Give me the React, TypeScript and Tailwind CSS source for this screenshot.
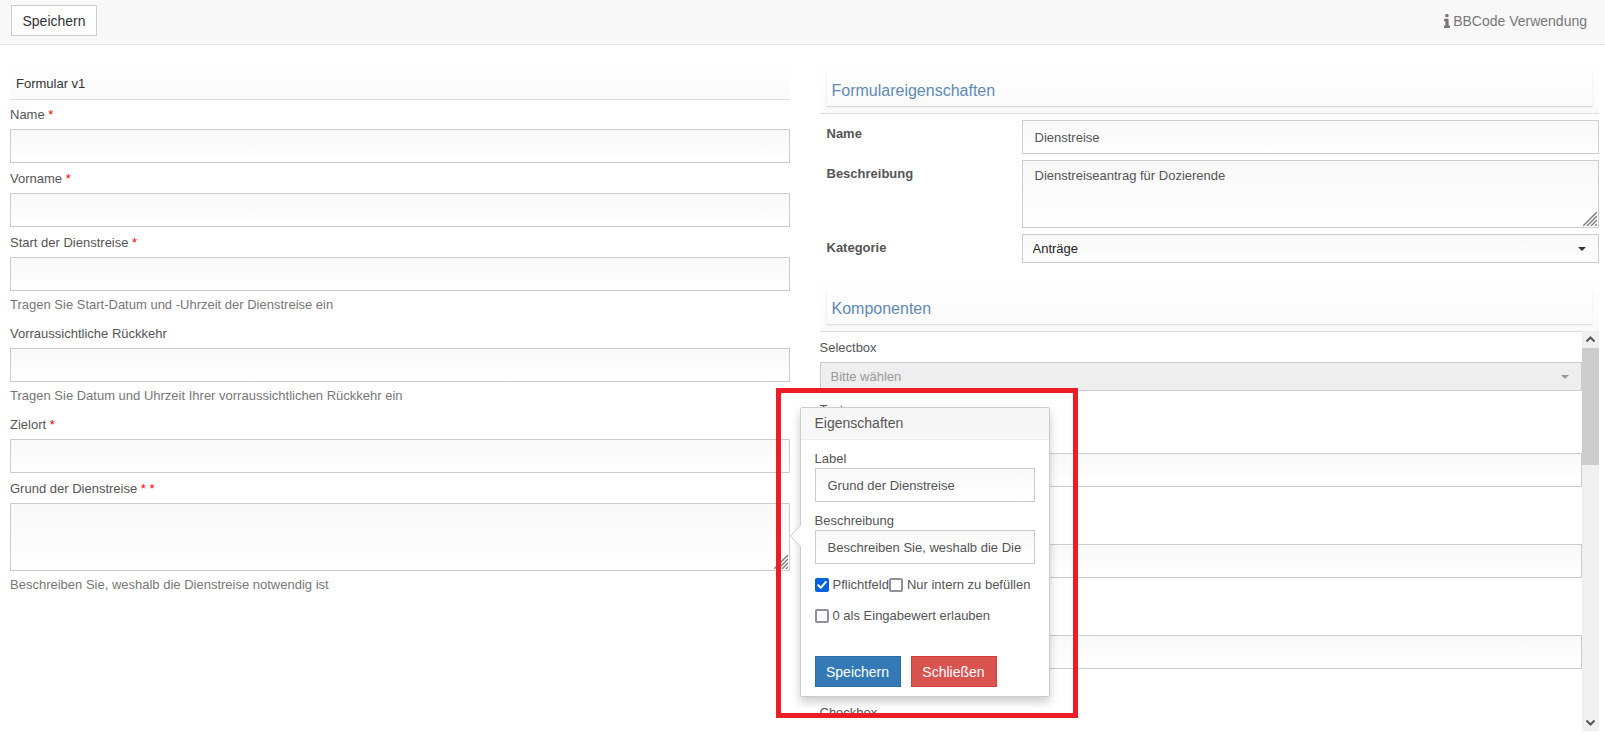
import { useState, type ReactNode } from 'react';

const controlClass =
  'block w-full border border-[#ccc] bg-linear-to-b from-[#f8f8f8] to-white px-3 text-[13px] text-[#555] outline-none focus:border-[#66afe9]';

interface FormField {
  id: string;
  label: string;
  stars: number;
  help?: string;
}

const fields: FormField[] = [
  { id: 'name', label: 'Name', stars: 1 },
  { id: 'vorname', label: 'Vorname', stars: 1 },
  { id: 'start', label: 'Start der Dienstreise', stars: 1, help: 'Tragen Sie Start-Datum und -Uhrzeit der Dienstreise ein' },
  { id: 'rueckkehr', label: 'Vorraussichtliche Rückkehr', stars: 0, help: 'Tragen Sie Datum und Uhrzeit Ihrer vorraussichtlichen Rückkehr ein' },
  { id: 'zielort', label: 'Zielort', stars: 1 },
];

function FieldLabel({ id, stars, children }: { id: string; stars: number; children: ReactNode }) {
  return (
    <label htmlFor={id} className="mb-1 block leading-5">
      {children}
      {stars > 0 && <span className="text-[#f00]">{' *'.repeat(stars)}</span>}
    </label>
  );
}

function HelpText({ children }: { children: ReactNode }) {
  return <p className="mt-1 mb-[9px] leading-5 text-[#777]">{children}</p>;
}

function InfoIcon() {
  return (
    <svg width="6" height="14" viewBox="0 0 6 14" fill="currentColor" aria-hidden="true">
      <rect x="1.2" y="0" width="3.4" height="3.2" rx="1.2" />
      <path d="M0.4 4.8H4.2Q4.6 4.8 4.6 5.2V11.6H5.6Q6 11.6 6 12V13.6Q6 14 5.6 14H0.4Q0 14 0 13.6V12Q0 11.6 0.4 11.6H1.4V7.2H0.4Q0 7.2 0 6.8V5.2Q0 4.8 0.4 4.8z" />
    </svg>
  );
}

// Diagonal stripes in the corner of a textarea
function ResizeGrip() {
  return (
    <svg
      className="pointer-events-none absolute right-0.5 bottom-0.5"
      width="14"
      height="14"
      viewBox="0 0 14 14"
      stroke="#808080"
      strokeWidth="1.5"
      aria-hidden="true"
    >
      <path d="M0 14L14 0M4 14L14 4M8 14L14 8M12 14L14 12" />
    </svg>
  );
}

function Caret({ className }: { className: string }) {
  return (
    <svg className={`pointer-events-none absolute top-[13px] ${className}`} width="8" height="4" viewBox="0 0 8 4" fill="currentColor" aria-hidden="true">
      <path d="M0 0h8L4 4z" />
    </svg>
  );
}

function SectionTitle({ children }: { children: ReactNode }) {
  return (
    <div className="border-t border-[#fafafa] bg-linear-to-b from-white to-[#fafafa] p-1.5">
      <h2 className="border-r border-b border-l border-x-[#f7f7f7] border-b-[#ddd] bg-linear-to-b from-white to-[#fafafa] px-[5px] pt-[7px] pb-[3px] text-base leading-6 text-[#5f8ab4] shadow-[0_1px_2px_rgba(0,0,0,0.05)]">
        {children}
      </h2>
    </div>
  );
}

function CheckOption({ label, initial = false }: { label: string; initial?: boolean }) {
  const [checked, setChecked] = useState(initial);
  return (
    <label className="flex items-center gap-1 leading-5 whitespace-nowrap">
      <span className="relative block size-3.5">
        <input
          type="checkbox"
          checked={checked}
          onChange={(e) => setChecked(e.target.checked)}
          className="block size-3.5 appearance-none rounded-xs border-2 border-[#8f8f9d] bg-white checked:border-[#0060df] checked:bg-[#0060df]"
        />
        {checked && (
          <svg className="pointer-events-none absolute inset-0" width="14" height="14" viewBox="0 0 14 14" fill="none" stroke="#fff" strokeWidth="2" strokeLinecap="round" strokeLinejoin="round" aria-hidden="true">
            <path d="M3.2 7.2L5.8 9.8L10.8 4" />
          </svg>
        )}
      </span>
      {label}
    </label>
  );
}

function PropertiesPopover() {
  const [label, setLabel] = useState('Grund der Dienstreise');
  const [description, setDescription] = useState('Beschreiben Sie, weshalb die Dienstreise notwendig ist');

  return (
    <div className="absolute -top-24 left-full z-10 ml-2.5 w-[250px]">
      <div className="rounded-xs border border-[#ccc] bg-white shadow-[0_5px_10px_rgba(0,0,0,0.2)]">
        <h3 className="border-b border-[#ebebeb] bg-[#f7f7f7] px-3.5 pt-[5px] pb-1.5 text-sm leading-5">Eigenschaften</h3>
        <div className="px-3.5 pt-2.5 pb-[9px]">
          <label htmlFor="prop-label" className="block leading-[18px]">Label</label>
          <input id="prop-label" className={`${controlClass} h-[34px]`} value={label} onChange={(e) => setLabel(e.target.value)} />
          <label htmlFor="prop-description" className="mt-2.5 block leading-[18px]">Beschreibung</label>
          <input id="prop-description" className={`${controlClass} h-[34px]`} value={description} onChange={(e) => setDescription(e.target.value)} />
          <div className="mt-[11px] flex flex-wrap gap-y-[11px]">
            <CheckOption label="Pflichtfeld" initial />
            <CheckOption label="Nur intern zu befüllen" />
            <CheckOption label="0 als Eingabewert erlauben" />
          </div>
          <div className="mt-[30px] flex gap-2.5 text-sm text-white">
            <button type="button" className="h-[31px] w-[86px] border border-[#2e6da4] bg-[#337ab7]">Speichern</button>
            <button type="button" className="h-[31px] w-[86px] border border-[#d43f3a] bg-[#d9534f]">Schließen</button>
          </div>
        </div>
      </div>
      <svg className="absolute top-[118px] -left-2.5" width="11" height="22" viewBox="0 0 11 22" aria-hidden="true">
        <path d="M11 0L0 11L11 22z" fill="#fff" />
        <path d="M11 0L0.5 11L11 22" fill="none" stroke="#ccc" />
      </svg>
      <div className="pointer-events-none absolute -top-[19px] -right-7 -bottom-[21px] -left-6 border-5 border-[#ee1c24]" />
    </div>
  );
}

function FormPreview() {
  return (
    <section className="min-w-0 flex-1">
      <h2 className="mb-[5px] border-t border-b border-t-[#fafafa] border-b-[#ddd] bg-linear-to-b from-white to-[#fafafa] px-1.5 pt-2 pb-[5px] leading-5 text-[#333]">
        Formular v1
      </h2>
      {fields.map((field) => (
        <div key={field.id} className={field.help ? '' : 'mb-1.5'}>
          <FieldLabel id={field.id} stars={field.stars}>{field.label}</FieldLabel>
          <input id={field.id} className={`${controlClass} h-[34px]`} />
          {field.help && <HelpText>{field.help}</HelpText>}
        </div>
      ))}
      <FieldLabel id="grund" stars={2}>Grund der Dienstreise</FieldLabel>
      <div className="relative">
        <textarea id="grund" className={`${controlClass} h-[68px] resize-none py-1.5`} />
        <ResizeGrip />
        <PropertiesPopover />
      </div>
      <HelpText>Beschreiben Sie, weshalb die Dienstreise notwendig ist</HelpText>
    </section>
  );
}

function FormProperties() {
  return (
    <div>
      <SectionTitle>Formulareigenschaften</SectionTitle>
      <div className="grid grid-cols-[195px_1fr] gap-x-[7px] gap-y-1.5 border-t border-[#ddd] pt-1.5">
        <label htmlFor="form-name" className="pt-1 pl-[7px] leading-5 font-bold">Name</label>
        <input id="form-name" className={`${controlClass} h-[34px]`} defaultValue="Dienstreise" />
        <label htmlFor="form-description" className="pt-1 pl-[7px] leading-5 font-bold">Beschreibung</label>
        <div className="relative">
          <textarea id="form-description" className={`${controlClass} h-[68px] resize-none py-1.5 leading-[18px]`} defaultValue="Dienstreiseantrag für Dozierende" />
          <ResizeGrip />
        </div>
        <label htmlFor="form-category" className="pt-1 pl-[7px] leading-5 font-bold">Kategorie</label>
        <div className="relative">
          <select id="form-category" className="block h-[29px] w-full appearance-none border border-[#ccc] bg-linear-to-b from-[#f8f8f8] to-white px-2.5 text-[13px] text-[#222]">
            <option>Anträge</option>
          </select>
          <Caret className="right-[13px] text-[#333]" />
        </div>
      </div>
    </div>
  );
}

function ComponentList() {
  return (
    <div>
      <SectionTitle>Komponenten</SectionTitle>
      <div className="flex h-[400px]">
        <div className="min-w-0 flex-1 overflow-hidden border-t border-[#ddd] pt-1.5">
          <label htmlFor="comp-select" className="mb-1 block leading-5">Selectbox</label>
          <div className="relative">
            <select id="comp-select" disabled className="block h-[29px] w-full appearance-none border border-[#ccc] bg-[#eee] px-2.5 text-[13px] text-[#999] opacity-100">
              <option>Bitte wählen</option>
            </select>
            <Caret className="right-[13px] text-[#999]" />
          </div>
          <p className="mt-[9px] mb-[33px] leading-5">Text</p>
          <div className="space-y-[57px]">
            <input aria-label="Textfeld" className={`${controlClass} h-[34px]`} />
            <input aria-label="Datum" className={`${controlClass} h-[34px]`} />
            <input aria-label="Zahl" className={`${controlClass} h-[34px]`} />
          </div>
          <p className="mt-[34px] leading-5">Checkbox</p>
        </div>
        <div className="flex w-[17px] flex-col bg-[#f0f0f0] text-[#555]" aria-hidden="true">
          <svg width="17" height="17" viewBox="0 0 17 17" fill="none" stroke="currentColor" strokeWidth="2">
            <path d="M4.5 10.5L8.5 6.5L12.5 10.5" />
          </svg>
          <div className="h-[117px] bg-[#cdcdcd]" />
          <svg className="mt-auto" width="17" height="17" viewBox="0 0 17 17" fill="none" stroke="currentColor" strokeWidth="2">
            <path d="M4.5 6.5L8.5 10.5L12.5 6.5" />
          </svg>
        </div>
      </div>
    </div>
  );
}

export default function App() {
  return (
    <div className="bg-white font-['Liberation_Sans',Arial,sans-serif] text-[13px] text-[#555]">
      <header className="flex items-start justify-between border-b border-[#e7e7e7] bg-[#f8f8f8] pt-[5px] pr-[18px] pb-2 pl-[11px] text-sm">
        <button type="button" className="h-[31px] w-[86px] border border-[#ccc] bg-white text-[#333]">Speichern</button>
        <a href="#bbcode" className="flex h-[31px] items-center gap-[3px] text-[#777]">
          <InfoIcon />
          BBCode Verwendung
        </a>
      </header>
      <main className="flex gap-[30px] overflow-hidden pt-5 pr-1.5 pb-1 pl-2.5">
        <FormPreview />
        <section className="flex min-w-0 flex-1 flex-col gap-5">
          <FormProperties />
          <ComponentList />
        </section>
      </main>
    </div>
  );
}
